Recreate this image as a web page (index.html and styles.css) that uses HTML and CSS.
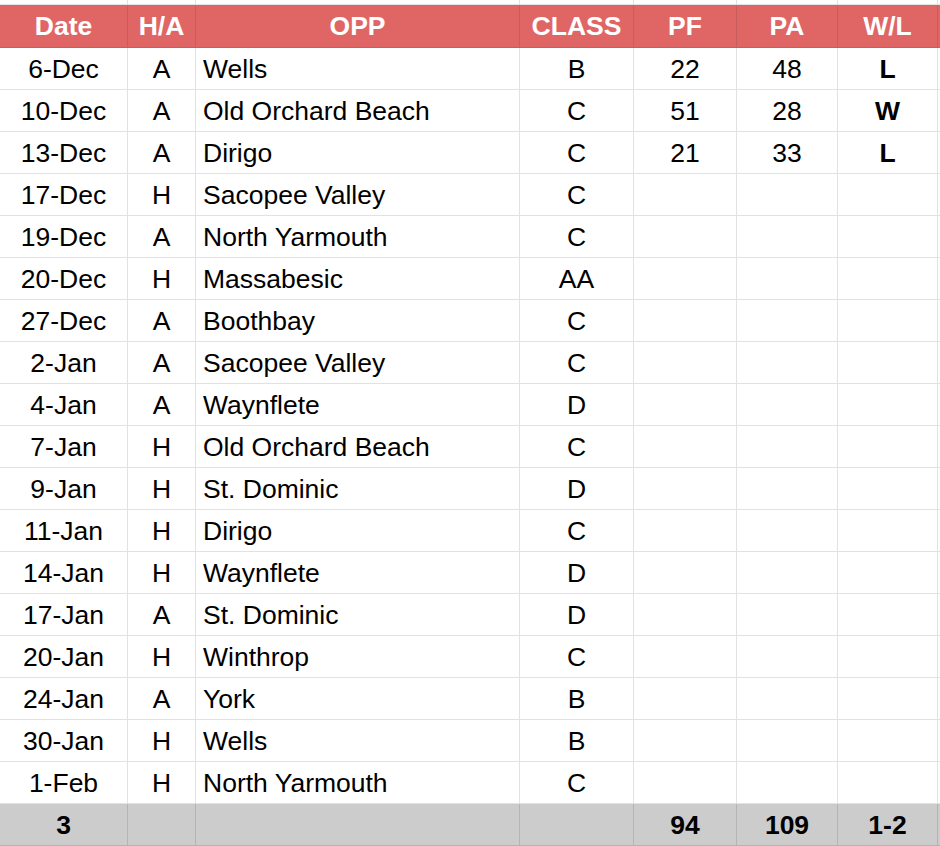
FILE: index.html
```html
<!DOCTYPE html>
<html>
<head>
<meta charset="utf-8">
<link rel="stylesheet" href="styles.css">
</head>
<body>
<table class="sheet">
<colgroup>
<col class="c-date"><col class="c-ha"><col class="c-opp"><col class="c-class"><col class="c-pf"><col class="c-pa"><col class="c-wl"><col class="c-extra">
</colgroup>
<tr class="stub"><td></td><td></td><td></td><td></td><td></td><td></td><td></td><td></td></tr>
<tr class="head"><th>Date</th><th>H/A</th><th>OPP</th><th>CLASS</th><th>PF</th><th>PA</th><th>W/L</th><th></th></tr>
<tr><td>6-Dec</td><td>A</td><td class="opp">Wells</td><td>B</td><td>22</td><td>48</td><td class="wl">L</td><td></td></tr>
<tr><td>10-Dec</td><td>A</td><td class="opp">Old Orchard Beach</td><td>C</td><td>51</td><td>28</td><td class="wl">W</td><td></td></tr>
<tr><td>13-Dec</td><td>A</td><td class="opp">Dirigo</td><td>C</td><td>21</td><td>33</td><td class="wl">L</td><td></td></tr>
<tr><td>17-Dec</td><td>H</td><td class="opp">Sacopee Valley</td><td>C</td><td></td><td></td><td></td><td></td></tr>
<tr><td>19-Dec</td><td>A</td><td class="opp">North Yarmouth</td><td>C</td><td></td><td></td><td></td><td></td></tr>
<tr><td>20-Dec</td><td>H</td><td class="opp">Massabesic</td><td>AA</td><td></td><td></td><td></td><td></td></tr>
<tr><td>27-Dec</td><td>A</td><td class="opp">Boothbay</td><td>C</td><td></td><td></td><td></td><td></td></tr>
<tr><td>2-Jan</td><td>A</td><td class="opp">Sacopee Valley</td><td>C</td><td></td><td></td><td></td><td></td></tr>
<tr><td>4-Jan</td><td>A</td><td class="opp">Waynflete</td><td>D</td><td></td><td></td><td></td><td></td></tr>
<tr><td>7-Jan</td><td>H</td><td class="opp">Old Orchard Beach</td><td>C</td><td></td><td></td><td></td><td></td></tr>
<tr><td>9-Jan</td><td>H</td><td class="opp">St. Dominic</td><td>D</td><td></td><td></td><td></td><td></td></tr>
<tr><td>11-Jan</td><td>H</td><td class="opp">Dirigo</td><td>C</td><td></td><td></td><td></td><td></td></tr>
<tr><td>14-Jan</td><td>H</td><td class="opp">Waynflete</td><td>D</td><td></td><td></td><td></td><td></td></tr>
<tr><td>17-Jan</td><td>A</td><td class="opp">St. Dominic</td><td>D</td><td></td><td></td><td></td><td></td></tr>
<tr><td>20-Jan</td><td>H</td><td class="opp">Winthrop</td><td>C</td><td></td><td></td><td></td><td></td></tr>
<tr><td>24-Jan</td><td>A</td><td class="opp">York</td><td>B</td><td></td><td></td><td></td><td></td></tr>
<tr><td>30-Jan</td><td>H</td><td class="opp">Wells</td><td>B</td><td></td><td></td><td></td><td></td></tr>
<tr><td>1-Feb</td><td>H</td><td class="opp">North Yarmouth</td><td>C</td><td></td><td></td><td></td><td></td></tr>
<tr class="foot"><td>3</td><td></td><td></td><td></td><td>94</td><td>109</td><td>1-2</td><td></td></tr>
</table>
</body>
</html>
```
FILE: styles.css
```css
html, body {
  margin: 0;
  padding: 0;
  background: #ffffff;
  overflow: hidden;
}
.sheet {
  border-collapse: collapse;
  table-layout: fixed;
  width: 960px;
  font-family: "Liberation Sans", Arial, sans-serif;
  font-size: 26.5px;
  color: #000000;
  margin-left: -1px;
  margin-top: -1px;
}
.c-date { width: 128px; }
.c-ha { width: 68px; }
.c-opp { width: 324px; }
.c-class { width: 114px; }
.c-pf { width: 103px; }
.c-pa { width: 101px; }
.c-wl { width: 100px; }
.c-extra { width: 22px; }
.sheet td, .sheet th {
  border: 1px solid #e2e2e2;
  height: 41px;
  padding: 0 7px;
  text-align: center;
  vertical-align: middle;
  white-space: nowrap;
  overflow: hidden;
  line-height: 30px;
}
.sheet .stub td {
  height: 4px;
  padding: 0;
  line-height: 0;
}
.sheet .head th {
  background: #e06666;
  color: #ffffff;
  font-weight: bold;
  border-color: #c95c5c;
  height: 42px;
}
.sheet td.opp {
  text-align: left;
}
.sheet td.wl {
  font-weight: bold;
}
.sheet .foot td {
  background: #cccccc;
  border-color: #b4b4b4;
  font-weight: bold;
}
```
